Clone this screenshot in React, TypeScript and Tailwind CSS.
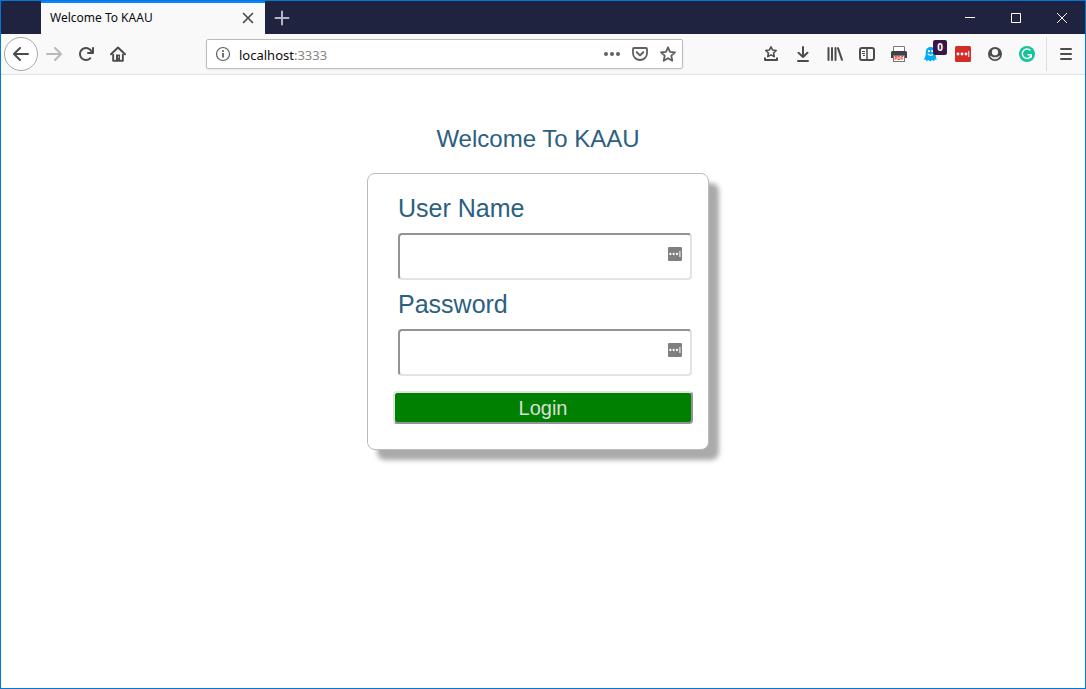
import type { ReactNode } from "react";

function Glyph({ children, size = 16 }: { children: ReactNode; size?: 16 | 14 }) {
  return (
    <svg
      viewBox="0 0 16 16"
      width={size}
      height={size}
      fill="none"
      stroke="currentColor"
      strokeWidth="2"
      aria-hidden="true"
      className="shrink-0"
    >
      {children}
    </svg>
  );
}

function ToolButton({ label, children }: { label: string; children: ReactNode }) {
  return (
    <button
      type="button"
      aria-label={label}
      className="relative flex h-8 w-8 shrink-0 items-center justify-center text-[#4c4c4d]"
    >
      {children}
    </button>
  );
}

const arrowPath =
  "M15 7H3.414l4.293-4.293a1 1 0 0 0-1.414-1.414l-6 6a1 1 0 0 0 0 1.414l6 6a1 1 0 0 0 1.414-1.414L3.414 9H15a1 1 0 0 0 0-2z";

function TitleBar() {
  return (
    <header className="flex h-[33px] bg-[#202340] pl-10">
      <div className="flex w-56 items-center justify-between border-t-2 border-[#0a84ff] bg-[#f9f9fa] pr-2 pb-0.5 pl-[9px]">
        <span className="text-[12px] leading-4 text-[#0c0c0d]">Welcome To KAAU</span>
        <button type="button" aria-label="Close tab" className="flex h-4 w-[18px] items-center justify-center text-[#4c4c4d]">
          <Glyph>
            <path d="M3.5 3.5l9 9M12.5 3.5l-9 9" strokeWidth="1.7" strokeLinecap="round" />
          </Glyph>
        </button>
      </div>
      <button type="button" aria-label="New tab" className="flex w-[34px] items-center justify-center text-[#b4b5c0]">
        <Glyph>
          <path d="M8 1.500v13M1.500 8h13" strokeLinecap="round" />
        </Glyph>
      </button>
      <div className="ml-auto flex text-white">
        <button type="button" aria-label="Minimize" className="flex w-[46px] items-center justify-center">
          <Glyph>
            <path d="M3 7.5h10" strokeWidth="1" />
          </Glyph>
        </button>
        <button type="button" aria-label="Maximize" className="flex w-[46px] items-center justify-center">
          <Glyph>
            <path d="M3.5 3.5h9v9h-9z" strokeWidth="1" />
          </Glyph>
        </button>
        <button type="button" aria-label="Close window" className="flex w-[46px] items-center justify-center">
          <Glyph>
            <path d="M3 3l10 10M13 3L3 13" strokeWidth="1" />
          </Glyph>
        </button>
      </div>
    </header>
  );
}

function AddressBar() {
  return (
    <div className="mx-[72px] flex h-[30px] min-w-0 flex-1 items-center rounded-xs border border-[#bcbcbc] bg-white text-[#606061] shadow-[0_1px_3px_rgba(0,0,0,0.06)]">
      <button type="button" aria-label="Site information" className="flex h-7 w-8 items-center justify-center">
        <Glyph>
          <circle cx="8" cy="8" r="6.5" strokeWidth="1.2" />
          <path d="M8 7v4.6M8 4.2v1.8" strokeWidth="1.8" />
        </Glyph>
      </button>
      <a href="#" className="flex-1 pt-0.5 text-[13px] leading-5 text-[#0c0c0d]">
        localhost<span className="text-[#858585]">:3333</span>
      </a>
      <button type="button" aria-label="Page actions" className="flex h-7 w-7 items-center justify-center">
        <Glyph>
          <g fill="currentColor" stroke="none">
            <circle cx="2" cy="8" r="2" />
            <circle cx="8" cy="8" r="2" />
            <circle cx="14" cy="8" r="2" />
          </g>
        </Glyph>
      </button>
      <button type="button" aria-label="Save to Pocket" className="flex h-7 w-7 items-center justify-center">
        <Glyph>
          <path d="M2 2h12a1 1 0 0 1 1 1v4.2a7 6.8 0 0 1-14 0V3a1 1 0 0 1 1-1z" strokeWidth="1.8" />
          <path d="M4.7 6.2L8 9.4l3.3-3.2" strokeWidth="2" strokeLinecap="round" strokeLinejoin="round" />
        </Glyph>
      </button>
      <button type="button" aria-label="Bookmark this page" className="flex h-7 w-7 items-center justify-center">
        <Glyph>
          <path
            d="M8 1.3l2 4.5 5 .5-3.7 3.4 1 5L8 12.2l-4.3 2.5 1-5L1 6.3l5-.5z"
            strokeWidth="1.8"
            strokeLinejoin="round"
          />
        </Glyph>
      </button>
    </div>
  );
}

function Toolbar() {
  return (
    <nav className="flex h-[41px] items-center border-b border-[#e0e0e1] bg-[#f9f9fa] px-[3px]">
      <button
        type="button"
        aria-label="Back"
        className="flex h-[34px] w-[34px] shrink-0 items-center justify-center rounded-full border border-[#a9a9aa] bg-white text-[#4c4c4d]"
      >
        <Glyph>
          <path d={arrowPath} fill="currentColor" stroke="none" />
        </Glyph>
      </button>
      <button type="button" aria-label="Forward" disabled className="flex h-8 w-8 shrink-0 items-center justify-center text-[#b8b8b9]">
        <Glyph>
          <path d={arrowPath} fill="currentColor" stroke="none" transform="matrix(-1 0 0 1 16 0)" />
        </Glyph>
      </button>
      <ToolButton label="Reload">
        <Glyph>
          <path
            d="M15 1a1 1 0 0 0-1 1v2.418A6.995 6.995 0 1 0 8 15a6.954 6.954 0 0 0 4.95-2.05 1 1 0 0 0-1.414-1.414A5.019 5.019 0 1 1 12.549 6H10a1 1 0 0 0 0 2h5a1 1 0 0 0 1-1V2a1 1 0 0 0-1-1z"
            fill="currentColor"
            stroke="none"
          />
        </Glyph>
      </ToolButton>
      <ToolButton label="Home">
        <Glyph>
          <path d="M1 8.3L8 1.5l7 6.800" strokeLinecap="round" strokeLinejoin="round" />
          <path d="M3.200 8v6.800h9.600V8" strokeWidth="2" strokeLinejoin="round" />
          <path d="M6 15V8.500h4V15z" fill="currentColor" stroke="none" />
          <path d="M8 10.500h1v1H8z" fill="#f9f9fa" stroke="none" />
          <path d="M5 8v6M11 8v6" stroke="#f9f9fa" strokeWidth="0.800" />
        </Glyph>
      </ToolButton>

      <AddressBar />

      <ToolButton label="Bookmarks menu">
        <Glyph>
          <path d="M8 .9l1.600 3.100 3.600.500-2.600 2.500.600 3.600L8 8.900l-3.200 1.700.600-3.600L2.800 4.500 6.400 4z" strokeWidth="1.600" strokeLinejoin="round" />
          <path d="M2 12.200V14h12v-1.800" strokeLinecap="round" strokeLinejoin="round" />
        </Glyph>
      </ToolButton>
      <ToolButton label="Downloads">
        <Glyph>
          <path d="M8 1v10M3.500 6.800L8 11l4.500-4.200M3 15h10" strokeLinecap="round" strokeLinejoin="round" />
        </Glyph>
      </ToolButton>
      <ToolButton label="Library">
        <Glyph>
          <path d="M1.500 2v12M5 2v12M8.500 2v12M11 2.200l4 11.600" strokeWidth="2" strokeLinecap="round" />
        </Glyph>
      </ToolButton>
      <ToolButton label="Sidebars">
        <Glyph>
          <rect x="1" y="2" width="14" height="12" rx="2" />
          <path d="M8 2v12" strokeWidth="1.500" />
          <path d="M3 5.500h3M3 7.500h3M4 9.500h2" strokeWidth="1" />
        </Glyph>
      </ToolButton>
      <ToolButton label="Print to PDF">
        <Glyph>
          <path d="M2.500 5V.5h11V6" stroke="#77787a" strokeWidth="1" fill="#fff" />
          <path d="M1 5h14l1 1v6H0V6z" fill="#414142" stroke="none" />
          <rect x="2.500" y="9.500" width="11" height="6" fill="#fff" stroke="#77787a" strokeWidth="1" />
          <text x="8" y="14.300" textAnchor="middle" fontSize="5" fontWeight="700" fill="#ee2d2d" stroke="none">
            PDF
          </text>
        </Glyph>
      </ToolButton>
      <ToolButton label="Ghostery">
        <Glyph>
          <path
            d="M7.500 1C4.400 1 2.800 3.300 2.800 6.300c0 3.200-.5 5-2.300 7.500l2.300-.3.500 1.800 2.200-1.300 1.700 1.500 2-1.500 1.700 1.300.9-1.800 2 .3C12.800 11.500 12.600 9 12.600 6.300 12.600 3.300 10.700 1 7.500 1z"
            fill="#00aef0"
            stroke="none"
          />
          <circle cx="6" cy="5.200" r="1.100" fill="#fff" stroke="none" />
          <circle cx="9.300" cy="5.200" r="1.100" fill="#fff" stroke="none" />
          <path d="M4.800 7.800c1.200 2 4.400 2 5.600 0" stroke="#fff" strokeWidth="1.200" />
        </Glyph>
        <span className="absolute top-[2px] right-0 h-[15px] w-[14px] rounded-xs bg-[#3c1547] text-center text-[10px] leading-[15px] font-bold text-white">
          0
        </span>
      </ToolButton>
      <ToolButton label="LastPass">
        <Glyph>
          <rect width="16" height="16" rx="1.500" fill="#d32d27" stroke="none" />
          <g fill="#fff" stroke="none">
            <circle cx="3" cy="8" r="1.400" />
            <circle cx="7" cy="8" r="1.400" />
            <circle cx="11" cy="8" r="1.400" />
            <rect x="13.300" y="5" width="1" height="6" />
          </g>
        </Glyph>
      </ToolButton>
      <ToolButton label="Account">
        <Glyph>
          <circle cx="8" cy="8" r="7" fill="currentColor" stroke="none" />
          <circle cx="8" cy="6.200" r="3.100" fill="#f9f9fa" stroke="none" />
          <path d="M3.400 10c1 1.100 2.700 1.500 4.600 1.500s3.600-.4 4.600-1.500A5 5 0 0 1 3.400 10z" fill="#f9f9fa" stroke="#f9f9fa" strokeWidth="0.600" />
        </Glyph>
      </ToolButton>
      <ToolButton label="Grammarly">
        <Glyph>
          <circle cx="8" cy="8" r="8" fill="#15c39a" stroke="none" />
          <path d="M11.500 4.600A4.700 4.700 0 1 0 12.300 9.600" stroke="#fff" strokeWidth="1.500" />
          <path d="M8.600 8.700h3.700v2.900" stroke="#fff" strokeWidth="1.400" />
        </Glyph>
      </ToolButton>
      <span className="mr-[3px] ml-[3px] h-[34px] w-px shrink-0 bg-[#dededf]" />
      <ToolButton label="Open menu">
        <Glyph>
          <path d="M3 3h10M3 8h10M3 13h10" strokeLinecap="round" />
        </Glyph>
      </ToolButton>
    </nav>
  );
}

function Field({ id, label, type }: { id: string; label: string; type: "text" | "password" }) {
  return (
    <div className="mb-[9px] pr-px pl-1">
      <label htmlFor={id} className="mb-2.5 block text-[25px] leading-[30px]">
        {label}
      </label>
      <div className="relative">
        <input
          id={id}
          name={id}
          type={type}
          className="block h-[47px] w-full rounded border-2 border-t-[#949494] border-r-[#e3e3e3] border-b-[#e3e3e3] border-l-[#949494] bg-white pr-8 pl-2 text-[20px] outline-none"
        />
        <span className="pointer-events-none absolute top-3.5 right-2.5">
          <Glyph size={14}>
            <rect width="16" height="16" rx="1.500" fill="#7f7f7f" stroke="none" />
            <g fill="#fff" stroke="none">
              <circle cx="2.700" cy="8" r="1.300" />
              <circle cx="6.500" cy="8" r="1.300" />
              <circle cx="10.300" cy="8" r="1.300" />
              <rect x="13" y="4.500" width="1.200" height="7" />
            </g>
          </Glyph>
        </span>
      </div>
    </div>
  );
}

function LoginPage() {
  return (
    <main className="flex flex-1 flex-col items-center bg-white pt-12 pr-2.5 font-['Liberation_Sans',Arial,sans-serif] text-[#2b6080]">
      <h1 className="mb-[18px] text-[24px] leading-8">Welcome To KAAU</h1>
      <form
        className="w-full max-w-[342px] rounded-lg border border-[#bbbbbb] bg-white pt-[19px] pr-[15px] pb-[25px] pl-[25px] shadow-[10px_10px_5px_#aaaaaa]"
        onSubmit={(event) => event.preventDefault()}
      >
        <div className="pl-px">
          <Field id="username" label="User Name" type="text" />
          <Field id="password" label="Password" type="password" />
        </div>
        <button
          type="submit"
          className="mt-[15px] block h-[33px] w-full rounded border-2 border-t-[#e3e3e3] border-r-[#949494] border-b-[#949494] border-l-[#e3e3e3] bg-[#008000] pt-px text-[20px] leading-7 text-[#dddddd]"
        >
          Login
        </button>
      </form>
    </main>
  );
}

export default function App() {
  return (
    <div className="flex min-h-screen flex-col border border-[#0078d7] font-['Noto_Sans','Open_Sans',sans-serif]">
      <TitleBar />
      <Toolbar />
      <LoginPage />
    </div>
  );
}
